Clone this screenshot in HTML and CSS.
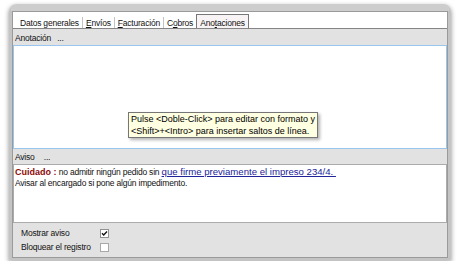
FILE: index.html
```html
<!DOCTYPE html>
<html lang="es">

<head>
    <meta charset="UTF-8">
    <meta name="viewport" content="width=device-width, initial-scale=1.0">
    <title>Anotaciones</title>
    <link rel="stylesheet" href="styles.css">
</head>

<body>
    <div class="window">
        <div class="window-body">

            <!-- pestañas -->
            <div class="tabs">
                <span class="tab">Datos generales</span>
                <span class="tab"><u>E</u>nvíos</span>
                <span class="tab"><u>F</u>acturación</span>
                <span class="tab">C<u>o</u>bros</span>
                <span class="tab active">Ano<u>t</u>aciones</span>
            </div>

            <div class="panel">
                <div class="field-label">Anotación <span class="dots">...</span></div>
                <div class="memo memo-focus">
                    <div class="tooltip">
                        Pulse &lt;Doble-Click&gt; para editar con formato y<br>
                        &lt;Shift&gt;+&lt;Intro&gt; para insertar saltos de línea.
                    </div>
                </div>

                <div class="field-label">Aviso <span class="dots dots-aviso">...</span></div>
                <div class="memo memo-aviso">
                    <p><b class="warn">Cuidado :</b> no admitir ningún pedido sin <a class="link" href="#">que firme previamente el impreso 234/4.&nbsp;</a></p>
                    <p>Avisar al encargado si pone algún impedimento.</p>
                </div>

                <div class="options">
                    <div class="option">
                        <span class="option-text">Mostrar aviso</span>
                        <svg class="check" width="9" height="9" viewBox="0 0 9 9">
                            <rect x="0.5" y="0.5" width="8" height="8" fill="#fff" stroke="#929292"/>
                            <path d="M2 4.3 L3.7 6 L7 2.6" fill="none" stroke="#111" stroke-width="1.4"/>
                        </svg>
                    </div>
                    <div class="option">
                        <span class="option-text">Bloquear el registro</span>
                        <svg class="check" width="9" height="9" viewBox="0 0 9 9">
                            <rect x="0.5" y="0.5" width="8" height="8" fill="#fff" stroke="#a8a8a8"/>
                        </svg>
                    </div>
                </div>
            </div>

        </div>
    </div>
</body>

</html>
```

FILE: styles.css
```css
body {
    margin: 0;
    background-color: #fff;
    font-family: "Liberation Sans", Arial, sans-serif;
    font-size: 8.5px;
    letter-spacing: -0.2px;
    color: #111;
}

/* marco de la ventana */
.window {
    margin: 4px 0 0 9px;
    width: 436px;
    height: 247px;
    border-style: solid;
    border-width: 7px 3px 3px 3px;
    border-color: #cdcdcd #c4c4c4 #c4c4c4 #c4c4c4;
    border-radius: 7px 7px 3px 3px;
    box-shadow: 0 2px 5px rgba(0, 0, 0, 0.45);
}

.window-body {
    height: 245px;
    border: 1px solid #9a9a9a;
    display: flex;
    flex-direction: column;
    background-color: #e2e2e2;
}

/* pestañas */
.tabs {
    height: 16px;
    flex-shrink: 0;
    display: flex;
    align-items: flex-end;
    padding-left: 4px;
    background-color: #fff;
    border-bottom: 1px solid #858585;
}

.tab {
    padding: 2px 3px 0 3px;
    line-height: 9px;
    white-space: nowrap;
}

.tab + .tab {
    border-left: 1px solid #c3c3c3;
}

.tab.active {
    padding-top: 4px;
    border: 1px solid #777;
    border-bottom: none;
    background-color: #f8f4f6;
}

.panel {
    flex: 1;
    display: flex;
    flex-direction: column;
}

.field-label {
    padding: 4px 0 2px 2px;
    line-height: 10px;
}

.field-label + .memo + .field-label {
    padding-top: 3px;
}

.dots {
    margin-left: 4px;
}

.dots-aviso {
    margin-left: 7px;
}

.memo {
    position: relative;
    background-color: #fff;
    border: 1px solid #ababab;
}

.memo-focus {
    height: 102px;
    border-color: #99c6ee;
}

.memo-aviso {
    height: 55px;
    padding: 1px;
    line-height: 11px;
}

.memo-aviso p {
    margin: 0;
}

.warn {
    color: #8e0a0a;
    font-size: 9px;
    letter-spacing: 0;
}

.link {
    color: #22229a;
    font-size: 9.6px;
    letter-spacing: 0;
    text-decoration: underline;
}

/* tooltip sobre el memo */
.tooltip {
    position: absolute;
    left: 114px;
    top: 66px;
    width: 190px;
    height: 26px;
    box-sizing: border-box;
    padding: 0 0 0 2px;
    font-size: 9px;
    letter-spacing: 0;
    line-height: 12px;
    color: #000;
    white-space: nowrap;
    background-color: #ffffe1;
    border: 1px solid #767676;
    box-shadow: 2px 2px 3px rgba(0, 0, 0, 0.3);
}

.options {
    padding: 3px 0 3px 8px;
}

.option {
    display: flex;
    align-items: center;
    height: 14px;
}

.option-text {
    width: 79px;
}

.check {
    display: block;
}
```
